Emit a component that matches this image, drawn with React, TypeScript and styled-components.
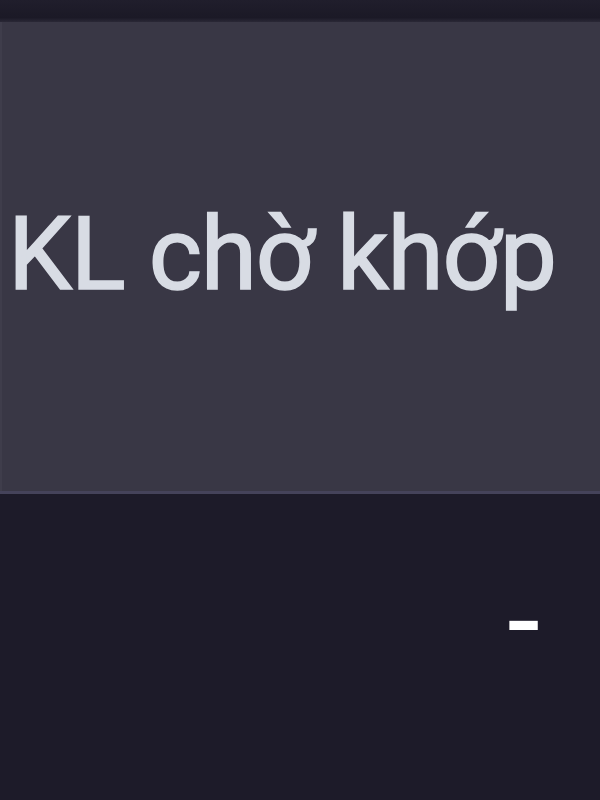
import React from "react";
import styled, { createGlobalStyle } from "styled-components";

const Global = createGlobalStyle`
  html, body {
    margin: 0;
    padding: 0;
    background: #1d1b29;
  }
  #root {
    width: 600px;
    height: 800px;
  }
`;

const Frame = styled.div`
  width: 600px;
  height: 800px;
  display: flex;
  flex-direction: column;
  background: #1d1b29;
  font-family: "Liberation Sans", Arial, sans-serif;
  overflow: hidden;
`;

const TopStrip = styled.div`
  height: 22px;
  flex: none;
  background: linear-gradient(#201e2c, #1b1926 80%, #2a2836);
`;

const HeaderCell = styled.div`
  height: 472px;
  flex: none;
  display: flex;
  align-items: center;
  padding: 0 0 6px 8px;
  box-sizing: border-box;
  background: #393745;
  border-bottom: 3px solid #45435a;
  box-shadow: inset 2px 0 0 #3f3d4b;
`;

const HeaderLabel = styled.span`
  font-family: Roboto, "Liberation Sans", Arial, sans-serif;
  font-size: 102px;
  letter-spacing: -1.2px;
  color: #d8dce4;
  -webkit-text-stroke: 1.6px #d8dce4;
  white-space: nowrap;
`;

const BodyRow = styled.div`
  flex: 1;
  display: flex;
  justify-content: flex-end;
  align-items: flex-start;
  padding: 65px 57px 0 0;
  box-sizing: border-box;
`;

const Value = styled.span<{ $muted?: boolean }>`
  font-size: 116px;
  line-height: 1;
  color: ${(p) => (p.$muted ? "#9a98a8" : "#ffffff")};
`;

export default function App() {
  return (
    <>
      <Global />
      <Frame>
        <TopStrip />
        <HeaderCell>
          <HeaderLabel>KL chờ khớp</HeaderLabel>
        </HeaderCell>
        <BodyRow>
          <Value>-</Value>
        </BodyRow>
      </Frame>
    </>
  );
}
